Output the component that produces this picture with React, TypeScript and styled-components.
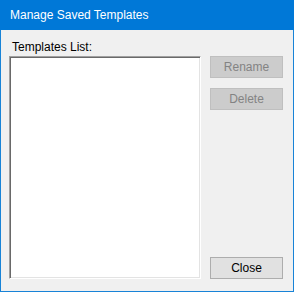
import React from "react";
import styled, { createGlobalStyle } from "styled-components";

const Global = createGlobalStyle`
  html, body { margin: 0; padding: 0; background: #f0f0f0; }
  * { box-sizing: border-box; }
`;

const Window = styled.div`
  width: 294px;
  height: 292px;
  display: flex;
  flex-direction: column;
  background: #f0f0f0;
  border: 1px solid #1883d7;
  border-top: none;
  font-family: "Liberation Sans", Arial, sans-serif;
  font-size: 12px;
`;

const TitleBar = styled.div`
  height: 30px;
  margin: 0 -1px;
  background: #0078d7;
  color: #ffffff;
  display: flex;
  align-items: center;
  padding-left: 10px;
  font-size: 12px;
  flex-shrink: 0;
`;

const Body = styled.div`
  flex: 1;
  display: flex;
  gap: 9px;
  padding: 8px 10px 12px 8px;
`;

const LeftColumn = styled.div`
  display: flex;
  flex-direction: column;
  width: 192px;
`;

const Label = styled.div`
  color: #000;
  height: 18px;
  line-height: 18px;
  padding-left: 3px;
`;

const ListBox = styled.div`
  flex: 1;
  background: #fff;
  border-top: 1px solid #a0a0a0;
  border-left: 1px solid #a0a0a0;
  border-right: 1px solid #ffffff;
  border-bottom: 1px solid #ffffff;
  box-shadow: inset 1px 1px 0 #696969, inset -1px -1px 0 #e3e3e3;
`;

const RightColumn = styled.div`
  flex: 1;
  display: flex;
  flex-direction: column;
  padding-top: 18px;
`;

const Button = styled.button<{ $disabled?: boolean }>`
  width: 73px;
  height: 22px;
  margin-bottom: 10px;
  font-family: inherit;
  font-size: 12px;
  padding: 0;
  background: ${(p) => (p.$disabled ? "#cccccc" : "#e1e1e1")};
  border: 1px solid ${(p) => (p.$disabled ? "#bfbfbf" : "#adadad")};
  color: ${(p) => (p.$disabled ? "#838383" : "#000000")};
`;

const Spacer = styled.div`
  flex: 1;
`;

const CloseButton = styled(Button)`
  margin-bottom: 0;
`;

export default function App() {
  return (
    <>
      <Global />
      <Window>
        <TitleBar>Manage Saved Templates</TitleBar>
        <Body>
          <LeftColumn>
            <Label>Templates List:</Label>
            <ListBox />
          </LeftColumn>
          <RightColumn>
            <Button $disabled>Rename</Button>
            <Button $disabled>Delete</Button>
            <Spacer />
            <CloseButton>Close</CloseButton>
          </RightColumn>
        </Body>
      </Window>
    </>
  );
}
